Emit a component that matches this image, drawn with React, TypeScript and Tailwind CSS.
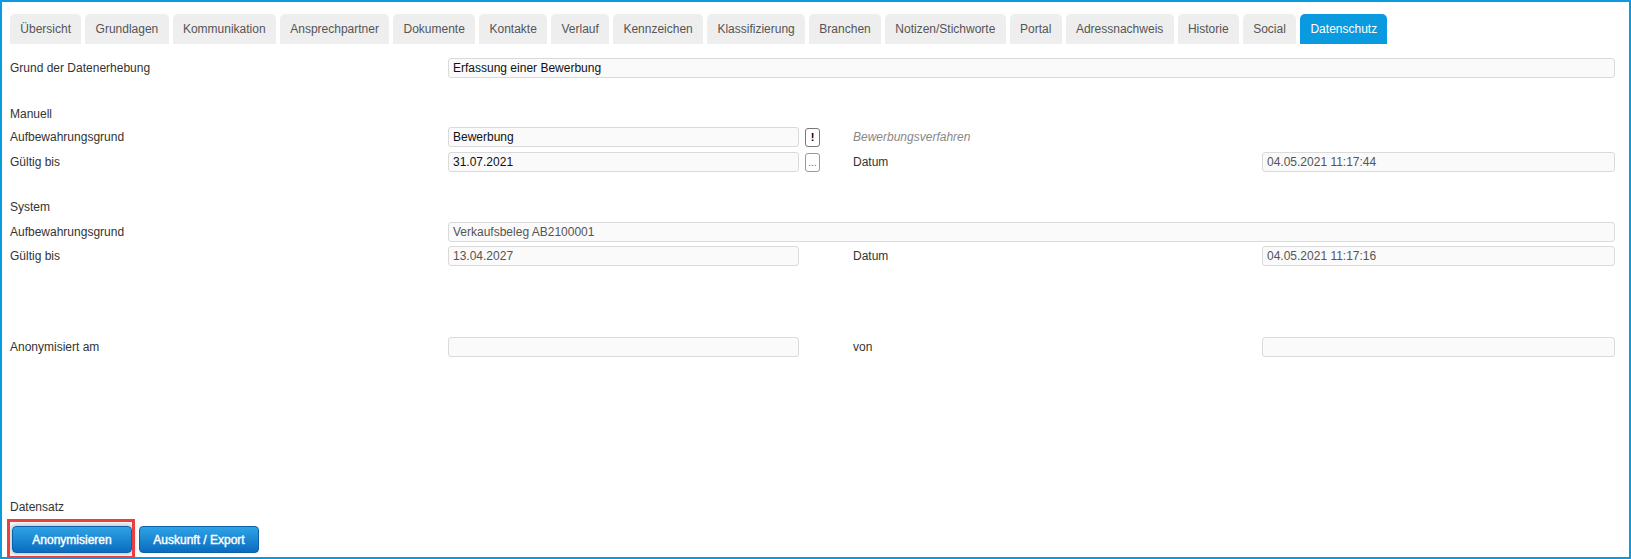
import type { ReactNode } from "react"

const tabs = [
  "Übersicht",
  "Grundlagen",
  "Kommunikation",
  "Ansprechpartner",
  "Dokumente",
  "Kontakte",
  "Verlauf",
  "Kennzeichen",
  "Klassifizierung",
  "Branchen",
  "Notizen/Stichworte",
  "Portal",
  "Adressnachweis",
  "Historie",
  "Social",
  "Datenschutz",
]

function Field({ value, width, muted }: { value?: string; width: string; muted?: boolean }) {
  return (
    <div
      className={`${width} h-[20px] flex items-center px-[4px] border border-[#dadada] rounded-[3px] bg-[#fafafa] text-[12px] ${
        muted ? "text-[#555]" : "text-[#111]"
      }`}
    >
      {value}
    </div>
  )
}

function Row({ label, children, className = "" }: { label: string; children?: ReactNode; className?: string }) {
  return (
    <div className={`flex items-center h-[20px] ${className}`}>
      <div className="w-[438px] shrink-0 text-[12px] text-[#333]">{label}</div>
      {children}
    </div>
  )
}

function SideLabel({ children, italic }: { children: ReactNode; italic?: boolean }) {
  return (
    <div className={`w-[409px] shrink-0 text-[12px] ${italic ? "italic text-[#888]" : "text-[#333]"}`}>{children}</div>
  )
}

export default function App() {
  return (
    <div className="w-[1631px] h-[559px] relative border-2 border-[#0a9ae0] bg-white font-['Liberation_Sans',Arial,sans-serif] overflow-hidden">
      {/* Tabs */}
      <div className="flex gap-[4px] pl-[8px] mt-[12px]">
        {tabs.map((t) => {
          const active = t === "Datenschutz"
          return (
            <div
              key={t}
              className={`h-[30px] px-[10.3px] flex items-center rounded-t-[5px] text-[12px] ${
                active ? "bg-[#0a9ae0] text-white" : "bg-[#eeeeee] text-[#555]"
              }`}
            >
              {t}
            </div>
          )
        })}
      </div>

      <div className="pl-[8px]">
        <Row label="Grund der Datenerhebung" className="mt-[14px]">
          <Field value="Erfassung einer Bewerbung" width="w-[1167px]" />
        </Row>

        {/* Manuell */}
        <Row label="Manuell" className="mt-[26px]" />
        <Row label="Aufbewahrungsgrund" className="mt-[3px]">
          <Field value="Bewerbung" width="w-[351px]" />
          <div className="ml-[6px] w-[15px] h-[19px] shrink-0 flex items-center justify-center border border-[#777] rounded-[3px] bg-white text-[11px] font-bold text-black">
            !
          </div>
          <div className="w-[33px] shrink-0" />
          <SideLabel italic>Bewerbungsverfahren</SideLabel>
        </Row>
        <Row label="Gültig bis" className="mt-[5px]">
          <Field value="31.07.2021" width="w-[351px]" />
          <div className="ml-[6px] w-[15px] h-[19px] shrink-0 flex items-end justify-center pb-[3px] border border-[#999] rounded-[3px] bg-white text-[10px] leading-none text-[#666]">
            ...
          </div>
          <div className="w-[33px] shrink-0" />
          <SideLabel>Datum</SideLabel>
          <Field value="04.05.2021 11:17:44" width="w-[353px]" muted />
        </Row>

        {/* System */}
        <Row label="System" className="mt-[25px]" />
        <Row label="Aufbewahrungsgrund" className="mt-[5px]">
          <Field value="Verkaufsbeleg AB2100001" width="w-[1167px]" muted />
        </Row>
        <Row label="Gültig bis" className="mt-[4px]">
          <Field value="13.04.2027" width="w-[351px]" muted />
          <div className="w-[54px] shrink-0" />
          <SideLabel>Datum</SideLabel>
          <Field value="04.05.2021 11:17:16" width="w-[353px]" muted />
        </Row>

        <Row label="Anonymisiert am" className="mt-[71px]">
          <Field width="w-[351px]" />
          <div className="w-[54px] shrink-0" />
          <SideLabel>von</SideLabel>
          <Field width="w-[353px]" />
        </Row>

        <Row label="Datensatz" className="mt-[140px]" />

        <div className="flex gap-[7px] mt-[9px] pl-[2px]">
          <div className="relative">
            <button className="w-[120px] h-[27px] rounded-[4px] border border-[#0b62a8] bg-gradient-to-b from-[#2ea3e6] to-[#0a6cbf] text-white text-[12px] [-webkit-text-stroke:0.4px_white] shadow-[0_0_4px_2px_rgba(0,0,0,0.22)]">
              Anonymisieren
            </button>
            <div className="absolute left-[-5px] top-[-7px] w-[128px] h-[40px] border-[3px] border-[#e8403f] pointer-events-none" />
          </div>
          <button className="w-[120px] h-[27px] rounded-[4px] border border-[#0b62a8] bg-gradient-to-b from-[#2ea3e6] to-[#0a6cbf] text-white text-[12px] [-webkit-text-stroke:0.4px_white]">
            Auskunft / Export
          </button>
        </div>
      </div>
    </div>
  )
}
